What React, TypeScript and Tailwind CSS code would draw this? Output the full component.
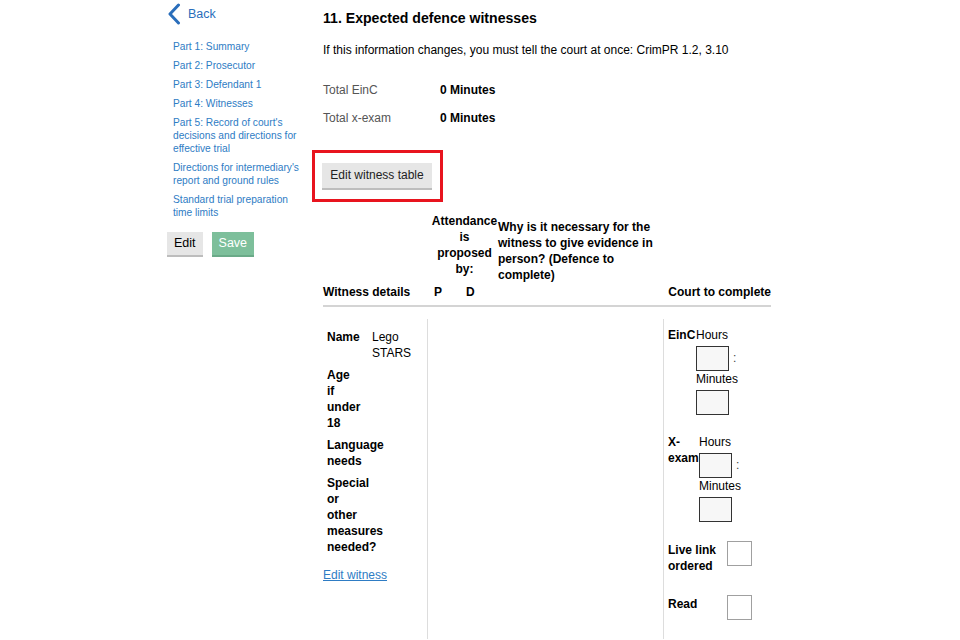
import React from "react";

const sideLinks = [
  ["Part 1: Summary"],
  ["Part 2: Prosecutor"],
  ["Part 3: Defendant 1"],
  ["Part 4: Witnesses"],
  ["Part 5: Record of court's", "decisions and directions for", "effective trial"],
  ["Directions for intermediary's", "report and ground rules"],
  ["Standard trial preparation", "time limits"],
];

const Sidebar = () => {
  return (
    <div className="w-[156px] shrink-0 pt-[3px]">
      <a href="#" className="flex items-center gap-[7px] text-[12.5px] text-[#2a6ebb] no-underline">
        <svg width="14" height="22" viewBox="0 0 14 22">
          <path d="M11.5 2 L3 11 L11.5 20" fill="none" stroke="#2a6ebb" strokeWidth="3" strokeLinecap="round" strokeLinejoin="round" />
        </svg>
        <span>Back</span>
      </a>
      <ul className="mt-[15px] pl-[6px] flex flex-col gap-[6px]">
        {sideLinks.map((lines, i) => (
          <li key={i}>
            <a href="#" className="block text-[10.2px] leading-[13px] text-[#2e7cc4]">
              {lines.map((l, j) => (
                <div key={j}>{l}</div>
              ))}
            </a>
          </li>
        ))}
      </ul>
      <div className="mt-[13px] flex gap-[9px]">
        <button className="h-[25px] px-[7px] bg-[#e6e6e6] border-b-2 border-[#bdbdbd] text-[12.5px] text-black">
          Edit
        </button>
        <button className="h-[25px] px-[7px] bg-[#7dbf9b] border-b-2 border-[#6aaa88] text-[12.5px] text-white">
          Save
        </button>
      </div>
    </div>
  );
};

const TimeBox = ({ className = "" }: { className?: string }) => (
  <div className={"w-[33px] h-[25px] bg-[#f7f7f7] border border-[#333] " + className} />
);

const CheckBox = ({ className = "" }: { className?: string }) => (
  <div className={"w-[25px] h-[25px] bg-white border border-[#a0a0a0] " + className} />
);

const TimeInputs = () => (
  <div>
    <div>Hours</div>
    <div className="flex items-center mt-[3px]">
      <TimeBox />
      <span className="ml-[4px] text-[#444]">:</span>
    </div>
    <div>Minutes</div>
    <TimeBox className="mt-[3px]" />
  </div>
);

const CourtCell = () => {
  return (
    <div className="pl-[4px] pt-[8px] text-[12px] leading-[16px]">
      <div className="flex">
        <div className="w-[28px] font-bold">EinC</div>
        <TimeInputs />
      </div>
      <div className="flex mt-[19px]">
        <div className="w-[31px] font-bold">
          <div>X-</div>
          <div>exam</div>
        </div>
        <TimeInputs />
      </div>
      <div className="flex items-start mt-[20px]">
        <div className="w-[59px] font-bold">
          <div>Live link</div>
          <div>ordered</div>
        </div>
        <CheckBox className="mt-[-1px]" />
      </div>
      <div className="flex items-start mt-[22px]">
        <div className="w-[59px] font-bold">Read</div>
        <CheckBox className="mt-[-1px]" />
      </div>
    </div>
  );
};

const Words = ({ text }: { text: string }) => (
  <div className="flex flex-col">
    {text.split(" ").map((w, i) => (
      <span key={i}>{w}</span>
    ))}
  </div>
);

const WitnessTable = () => {
  return (
    <div className="mt-[11px] w-[448px] text-[12px] leading-[16px]">
      <div className="flex items-end pb-[5px] border-b-2 border-[#d4d4d4] font-bold">
        <div className="w-[108px] shrink-0">Witness details</div>
        <div className="w-[67px] shrink-0">
          <div className="text-center">
            Attendance
            <br />is
            <br />proposed
            <br />by:
          </div>
          <div className="flex mt-[7px]">
            <div className="w-[32px] pl-[3px]">P</div>
            <div className="pl-[3px]">D</div>
          </div>
        </div>
        <div className="w-[170px] shrink-0 self-start pt-[6px]">
          Why is it necessary for the witness to give evidence in person? (Defence to complete)
        </div>
        <div className="flex-1 text-right whitespace-nowrap">Court to complete</div>
      </div>
      <div className="flex mt-[12px] h-[320px]">
        <div className="w-[105px] shrink-0 border-r border-[#ddd] pt-[10px]">
          <div className="pl-[4px] flex flex-col gap-[6px] font-bold">
            <div className="flex">
              <div className="w-[45px]">Name</div>
              <div className="font-normal">
                Lego
                <br />
                STARS
              </div>
            </div>
            <Words text="Age if under 18" />
            <Words text="Language needs" />
            <Words text="Special or other measures needed?" />
          </div>
          <a href="#" className="block mt-[12px] text-[#2e7cc4] underline">
            Edit witness
          </a>
        </div>
        <div className="w-[236px] shrink-0 border-r border-[#ddd]" />
        <div className="flex-1">
          <CourtCell />
        </div>
      </div>
    </div>
  );
};

export default function App() {
  return (
    <div className="w-[960px] h-[640px] overflow-hidden bg-white font-['Liberation_Sans',Arial,sans-serif] text-black">
      <div className="flex pl-[167px]">
        <Sidebar />
        <div className="pt-[9px]">
          <h1 className="text-[14.1px] leading-[18px] font-bold">11. Expected defence witnesses</h1>
          <p className="mt-[15px] text-[12px] leading-[16px]">
            If this information changes, you must tell the court at once: CrimPR 1.2, 3.10
          </p>
          <div className="mt-[24px] text-[12px] leading-[16px]">
            <div className="flex">
              <div className="w-[117px] text-[#555]">Total EinC</div>
              <div className="font-bold">0 Minutes</div>
            </div>
            <div className="flex mt-[12px]">
              <div className="w-[117px] text-[#555]">Total x-exam</div>
              <div className="font-bold">0 Minutes</div>
            </div>
          </div>
          <div className="mt-[24px] -ml-[11px] w-[131px] border-[3px] border-[#e8141e] pt-[9px] pb-[9px] pl-[7px]">
            <button className="w-[110px] h-[27px] bg-[#e6e6e6] border-b-2 border-[#bdbdbd] text-[12px] text-[#222] whitespace-nowrap">
              Edit witness table
            </button>
          </div>
          <WitnessTable />
        </div>
      </div>
    </div>
  );
}
